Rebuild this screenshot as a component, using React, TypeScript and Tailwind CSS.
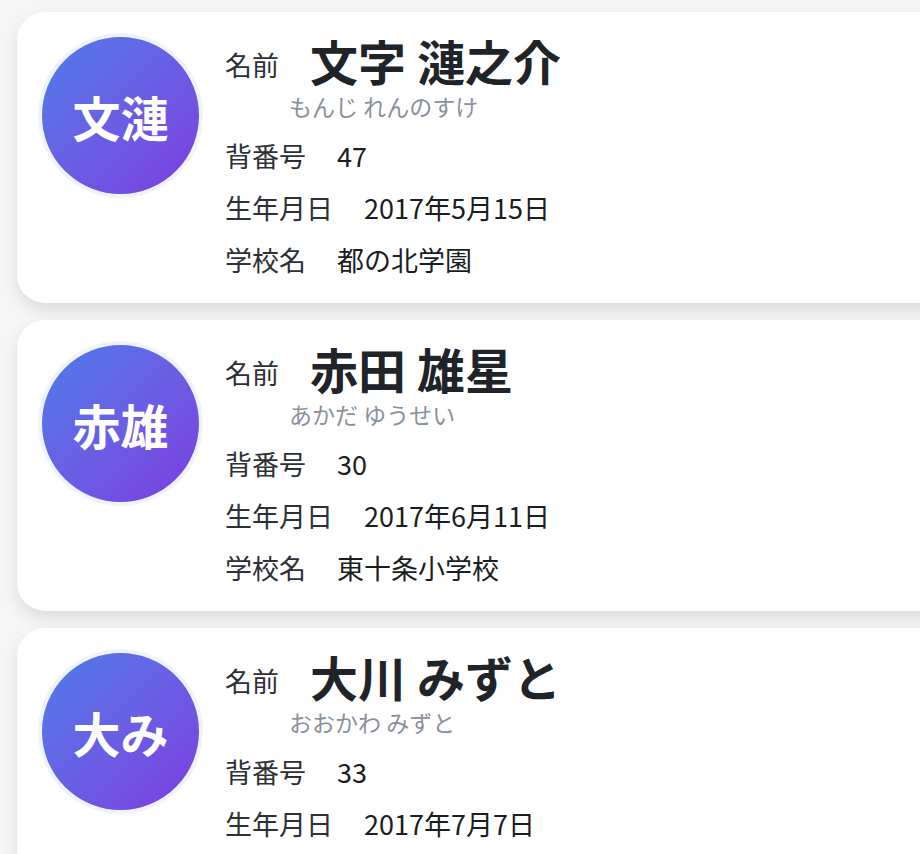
import React from "react";

type Player = {
  initials: string;
  name: string;
  kana: string;
  number: string;
  birthday: string;
  school: string;
};

const players: Player[] = [
  { initials: "文漣", name: "文字 漣之介", kana: "もんじ れんのすけ", number: "47", birthday: "2017年5月15日", school: "都の北学園" },
  { initials: "赤雄", name: "赤田 雄星", kana: "あかだ ゆうせい", number: "30", birthday: "2017年6月11日", school: "東十条小学校" },
  { initials: "大み", name: "大川 みずと", kana: "おおかわ みずと", number: "33", birthday: "2017年7月7日", school: "王子小学校" },
];

function Row({ label, value }: { label: string; value: string }) {
  return (
    <div className="flex h-[52px] items-center">
      <span className="text-[27px] text-[#2d3035]">{label}</span>
      <span className="ml-[31px] text-[27px] font-normal text-[#1a1d21]">{value}</span>
    </div>
  );
}

function Card({ p }: { p: Player }) {
  return (
    <div className="-mr-[60px] flex h-[291px] items-start rounded-[28px] bg-white pl-[21px] pt-[21px] shadow-[0_7px_16px_rgba(0,0,0,0.11)]">
      <div className="flex h-[165px] w-[165px] shrink-0 items-center justify-center rounded-full border-[4px] border-[#eef3fd] bg-gradient-to-br from-[#4b7be8] to-[#7b3bdf]">
        <span className="text-[48px] font-bold text-white">{p.initials}</span>
      </div>
      <div className="ml-[22px] mt-[3px] flex flex-col">
        <div className="flex h-[60px] items-center">
          <span className="mb-[1px] text-[27px] text-[#2d3035]">{"名前"}</span>
          <span className="mb-[12px] ml-[31px] text-[48px] font-bold leading-none text-[#202328]">{p.name}</span>
        </div>
        <div className="-mt-[2px] h-[24px] pl-[64px] text-[23px] leading-[24px] text-[#8a909c]">{p.kana}</div>
        <div className="mt-[12px] flex flex-col">
          <Row label="背番号" value={p.number} />
          <Row label="生年月日" value={p.birthday} />
          <Row label="学校名" value={p.school} />
        </div>
      </div>
    </div>
  );
}

export default function App() {
  return (
    <div
      className="h-[854px] w-[920px] overflow-hidden bg-[#f6f6f6]"
      style={{ fontFamily: '"Noto Sans CJK JP", "Noto Sans", sans-serif' }}
    >
      <div className="flex flex-col gap-[17px] pl-[17px] pt-[12px]">
        {players.map((p) => (
          <Card key={p.name} p={p} />
        ))}
      </div>
    </div>
  );
}
